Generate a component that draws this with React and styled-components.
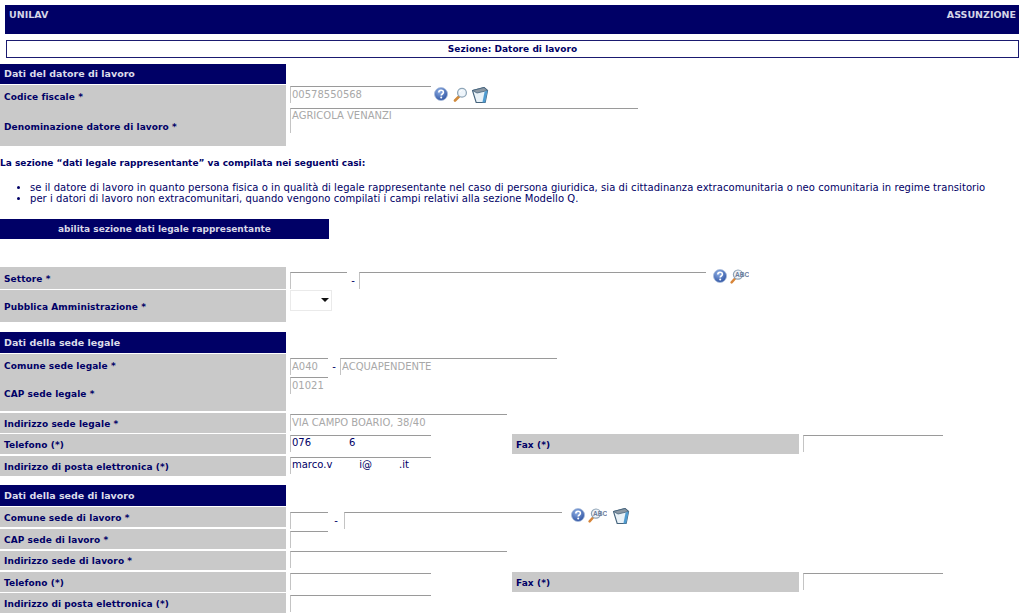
import React from "react";
import styled, { createGlobalStyle } from "styled-components";

const NAVY = "#000066";
const font = `"DejaVu Sans", Verdana, sans-serif`;

const Global = createGlobalStyle`
  html, body { margin: 0; padding: 0; background: #fff; overflow: hidden; }
  body { font-family: ${font}; font-size: 10px; color: ${NAVY}; }
`;

const Page = styled.div`
  width: 1024px;
  height: 615px;
  overflow: hidden;
`;
const Banner = styled.header`
  margin: 5px 5px 0;
  height: 29px;
  padding: 4px 3px 0 4px;
  box-sizing: border-box;
  background: ${NAVY};
  color: #d4d4e6;
  font-weight: bold;
  font-size: 9.5px;
  line-height: 11px;
  display: flex;
  justify-content: space-between;
`;
const SectionBar = styled.div`
  margin: 6px 5px 0 6px;
  height: 18px;
  box-sizing: border-box;
  border: 1px solid #1a1a70;
  text-align: center;
  font-weight: bold;
  font-size: 9px;
  letter-spacing: 0.03px;
  line-height: 17px;
`;
const Group = styled.section`
  margin-top: ${(p) => p.$top}px;
`;
const GroupHead = styled.h2`
  margin: 0 0 1px;
  width: 286px;
  height: ${(p) => p.$h || 21}px;
  box-sizing: border-box;
  padding-left: 4px;
  background: ${NAVY};
  color: #dcdcea;
  font-size: 9.5px;
  font-weight: bold;
  line-height: ${(p) => p.$h || 21}px;
`;
const Row = styled.div`
  display: grid;
  grid-template-columns: 286px 226px 287px 1fr;
  grid-template-rows: ${(p) => p.$h}px;
  margin-top: ${(p) => p.$gap || 0}px;
`;
const Label = styled.div`
  background: #c9c9c9;
  padding: 1px 0 0 4px;
  font-weight: bold;
  font-size: 9px;
  letter-spacing: 0.08px;
  display: flex;
  align-items: center;
`;
const Value = styled.div`
  grid-column: ${(p) => (p.$wide ? "2 / -1" : "auto")};
  padding: ${(p) => p.$top || 0}px 0 0 4px;
  display: flex;
  align-items: flex-start;
`;
const Field = styled.input`
  width: ${(p) => p.$w}px;
  height: ${(p) => p.$fh || 17}px;
  box-sizing: border-box;
  border: 0;
  border-top: 1px solid #9a9a9a;
  border-left: 1px solid #c4c4c4;
  padding: 0 0 2px 1px;
  margin: 0;
  outline: 0;
  background: transparent;
  font-family: ${font};
  font-size: 10px;
  color: #a8a8a8;
`;
const Area = styled.textarea`
  width: ${(p) => p.$w}px;
  height: 25px;
  box-sizing: border-box;
  border: 0;
  border-top: 1px solid #9a9a9a;
  border-left: 1px solid #c4c4c4;
  padding: 1px 0 0 1px;
  margin: 0;
  outline: 0;
  resize: none;
  overflow: hidden;
  font-family: ${font};
  font-size: 10px;
  line-height: 11px;
  color: #a8a8a8;
`;
const Filled = styled.div`
  width: ${(p) => p.$w}px;
  height: 17px;
  box-sizing: border-box;
  border-top: 1px solid #9a9a9a;
  border-left: 1px solid #c4c4c4;
  padding: 1px 0 0 1px;
  font-size: 10px;
  line-height: 12px;
  color: ${NAVY};
  white-space: nowrap;
  display: flex;
`;
const Blank = styled.span`
  display: inline-block;
  width: ${(p) => p.$w}px;
`;
const Dash = styled.span`
  width: ${(p) => p.$w}px;
  margin-top: ${(p) => p.$top || 3}px;
  text-align: center;
  line-height: 12px;
  font-size: 10px;
`;
const SelectWrap = styled.div`
  position: relative;
  width: 42px;
  height: 21px;
`;
const Select = styled.select`
  width: 100%;
  height: 100%;
  box-sizing: border-box;
  border: 1px solid #eaeaea;
  background: #fff;
  appearance: none;
  outline: 0;
  margin: 0;
`;
const Caret = styled.span`
  position: absolute;
  right: 3px;
  top: 8px;
  border-left: 4px solid transparent;
  border-right: 4px solid transparent;
  border-top: 4px solid #111;
  pointer-events: none;
`;
const Icons = styled.div`
  display: flex;
  align-items: flex-start;
  margin-left: ${(p) => p.$left}px;
  margin-top: ${(p) => p.$top || 0}px;
`;
const Icon = styled.svg`
  display: block;
  flex: none;
  margin-top: ${(p) => p.$dy || 0}px;
  margin-right: ${(p) => p.$gap || 0}px;
`;
const Intro = styled.p`
  margin: 11px 0 0;
  font-weight: bold;
  font-size: 9px;
  line-height: 12px;
`;
const Bullets = styled.ul`
  margin: 13px 0 0;
  padding: 0 0 0 30px;
  font-size: 10px;
  letter-spacing: 0.06px;
  line-height: 11px;
  white-space: nowrap;
`;
const EnableButton = styled.button`
  display: block;
  margin: 15px 0 0;
  width: 329px;
  height: 20px;
  border: 0;
  padding: 0;
  background: ${NAVY};
  color: #d8d8e8;
  font-family: ${font};
  font-size: 9px;
  font-weight: bold;
`;

const Help = ({ gap }) => (
  <Icon width="14" height="14" viewBox="0 0 14 14" $gap={gap} $dy={1}>
    <defs>
      <radialGradient id="hb" cx="40%" cy="30%" r="75%">
        <stop offset="0" stopColor="#8fb0e6" />
        <stop offset="1" stopColor="#2a4f9f" />
      </radialGradient>
    </defs>
    <circle cx="7" cy="7" r="6.5" fill="url(#hb)" stroke="#a8bcdc" strokeWidth=".8" />
    <path d="M4.8 5.5c0-3 4.6-3 4.6-.2 0 1.7-2.2 1.7-2.2 3.3" fill="none" stroke="#fff" strokeWidth="1.6" />
    <circle cx="7.2" cy="10.6" r="1" fill="#fff" />
  </Icon>
);
const Lens = ({ gap }) => (
  <Icon width="15" height="15" viewBox="0 0 15 15" $gap={gap} $dy={1}>
    <path d="M6.5 9 2 13.5" stroke="#d08a3c" strokeWidth="2.6" strokeLinecap="round" />
    <circle cx="9" cy="5.8" r="4.4" fill="#eef5fb" stroke="#8fa6b8" strokeWidth="1.3" />
    <path d="M6.8 5.2a2.6 2.6 0 0 1 2-1.8" fill="none" stroke="#fff" strokeWidth="1" />
  </Icon>
);
const AbcLens = ({ gap }) => (
  <Icon width="19" height="15" viewBox="0 0 19 15" $gap={gap} $dy={1}>
    <path d="M5.5 9 1.6 13.4" stroke="#d8863a" strokeWidth="2.4" strokeLinecap="round" />
    <circle cx="8" cy="5.6" r="4.6" fill="#eef3f8" stroke="#8ea3b6" strokeWidth="1.2" />
    <text x="5" y="8.4" fontFamily="Liberation Sans, sans-serif" fontSize="6.6" fontWeight="bold" fill="#6b7d9c">
      ABC
    </text>
  </Icon>
);
const Bin = ({ gap }) => (
  <Icon width="18" height="18" viewBox="0 0 18 18" $gap={gap}>
    <path d="M1.5 4.5 13 1.5l3.6 3-2.4 12H5.2z" fill="#e9f2f8" stroke="#45637c" strokeWidth="1.1" strokeLinejoin="round" />
    <path d="M1.5 4.5 13 1.5l3.6 3L6 7z" fill="#8b98a4" stroke="#45637c" strokeWidth=".8" strokeLinejoin="round" />
    <path d="M16.6 4.5 14.2 16.5H11.4L13.6 5.6z" fill="#4f9bd0" />
  </Icon>
);

const FieldRow = ({ label, h, gap, top, children, fax }) => (
  <Row $h={h} $gap={gap}>
    <Label>{label}</Label>
    {fax ? (
      <>
        <Value $top={top}>{children}</Value>
        <Label>Fax (*)</Label>
        <Value $top={top}>
          <Field $w={140} readOnly aria-label="Fax" />
        </Value>
      </>
    ) : (
      <Value $wide $top={top}>
        {children}
      </Value>
    )}
  </Row>
);

export default function App() {
  return (
    <Page>
      <Global />
      <Banner>
        <span>UNILAV</span>
        <span>ASSUNZIONE</span>
      </Banner>
      <SectionBar>Sezione: Datore di lavoro</SectionBar>

      <Group $top={6}>
        <GroupHead $h={20}>Dati del datore di lavoro</GroupHead>
        <FieldRow label="Codice fiscale *" h={22} top={1}>
          <Field $w={141} readOnly value="00578550568" />
          <Icons $left={3}>
            <Help gap={5} />
            <Lens gap={3} />
            <Bin />
          </Icons>
        </FieldRow>
        <FieldRow label="Denominazione datore di lavoro *" h={39} top={1}>
          <Area $w={348} readOnly value="AGRICOLA VENANZI" />
        </FieldRow>
      </Group>

      <Intro>La sezione “dati legale rappresentante” va compilata nei seguenti casi:</Intro>
      <Bullets>
        <li>se il datore di lavoro in quanto persona fisica o in qualità di legale rappresentante nel caso di persona giuridica, sia di cittadinanza extracomunitaria o neo comunitaria in regime transitorio</li>
        <li>per i datori di lavoro non extracomunitari, quando vengono compilati i campi relativi alla sezione Modello Q.</li>
      </Bullets>
      <EnableButton type="button">abilita sezione dati legale rappresentante</EnableButton>

      <Group $top={28}>
        <FieldRow label="Settore *" h={22} top={5}>
          <Field $w={57} readOnly />
          <Dash $w={12}>-</Dash>
          <Field $w={347} readOnly />
          <Icons $left={7} $top={-4}>
            <Help gap={3} />
            <AbcLens />
          </Icons>
        </FieldRow>
        <FieldRow label="Pubblica Amministrazione *" h={32} gap={1}>
          <SelectWrap>
            <Select aria-label="Pubblica Amministrazione">
              <option />
            </Select>
            <Caret />
          </SelectWrap>
        </FieldRow>
      </Group>

      <Group $top={10}>
        <GroupHead>Dati della sede legale</GroupHead>
        <FieldRow label="Comune sede legale *" h={22} top={4}>
          <Field $w={38} readOnly value="A040" />
          <Dash $w={12}>-</Dash>
          <Field $w={217} readOnly value="ACQUAPENDENTE" />
        </FieldRow>
        <FieldRow label="CAP sede legale *" h={35} top={1}>
          <Field $w={38} readOnly value="01021" />
        </FieldRow>
        <FieldRow label="Indirizzo sede legale *" h={20} gap={2} top={1}>
          <Field $w={217} readOnly value="VIA CAMPO BOARIO, 38/40" />
        </FieldRow>
        <FieldRow label="Telefono (*)" h={20} gap={1} top={1} fax>
          <Filled $w={141}>
            076<Blank $w={38} />6
          </Filled>
        </FieldRow>
        <FieldRow label="Indirizzo di posta elettronica (*)" h={20} gap={2} top={1}>
          <Filled $w={141}>
            marco.v<Blank $w={27} />i@<Blank $w={27} />.it
          </Filled>
        </FieldRow>
      </Group>

      <Group $top={9}>
        <GroupHead>Dati della sede di lavoro</GroupHead>
        <FieldRow label="Comune sede di lavoro *" h={20} top={5}>
          <Field $w={38} readOnly />
          <Dash $w={16}>-</Dash>
          <Field $w={218} readOnly />
          <Icons $left={9} $top={-5}>
            <Help gap={3} />
            <AbcLens gap={5} />
            <Bin />
          </Icons>
        </FieldRow>
        <FieldRow label="CAP sede di lavoro *" h={20} gap={2} top={2}>
          <Field $w={38} readOnly />
        </FieldRow>
        <FieldRow label="Indirizzo sede di lavoro *" h={19} gap={2}>
          <Field $w={217} readOnly />
        </FieldRow>
        <FieldRow label="Telefono (*)" h={20} gap={2} top={1} fax>
          <Field $w={141} readOnly />
        </FieldRow>
        <FieldRow label="Indirizzo di posta elettronica (*)" h={20} gap={1} top={2}>
          <Field $w={141} readOnly />
        </FieldRow>
      </Group>
    </Page>
  );
}
